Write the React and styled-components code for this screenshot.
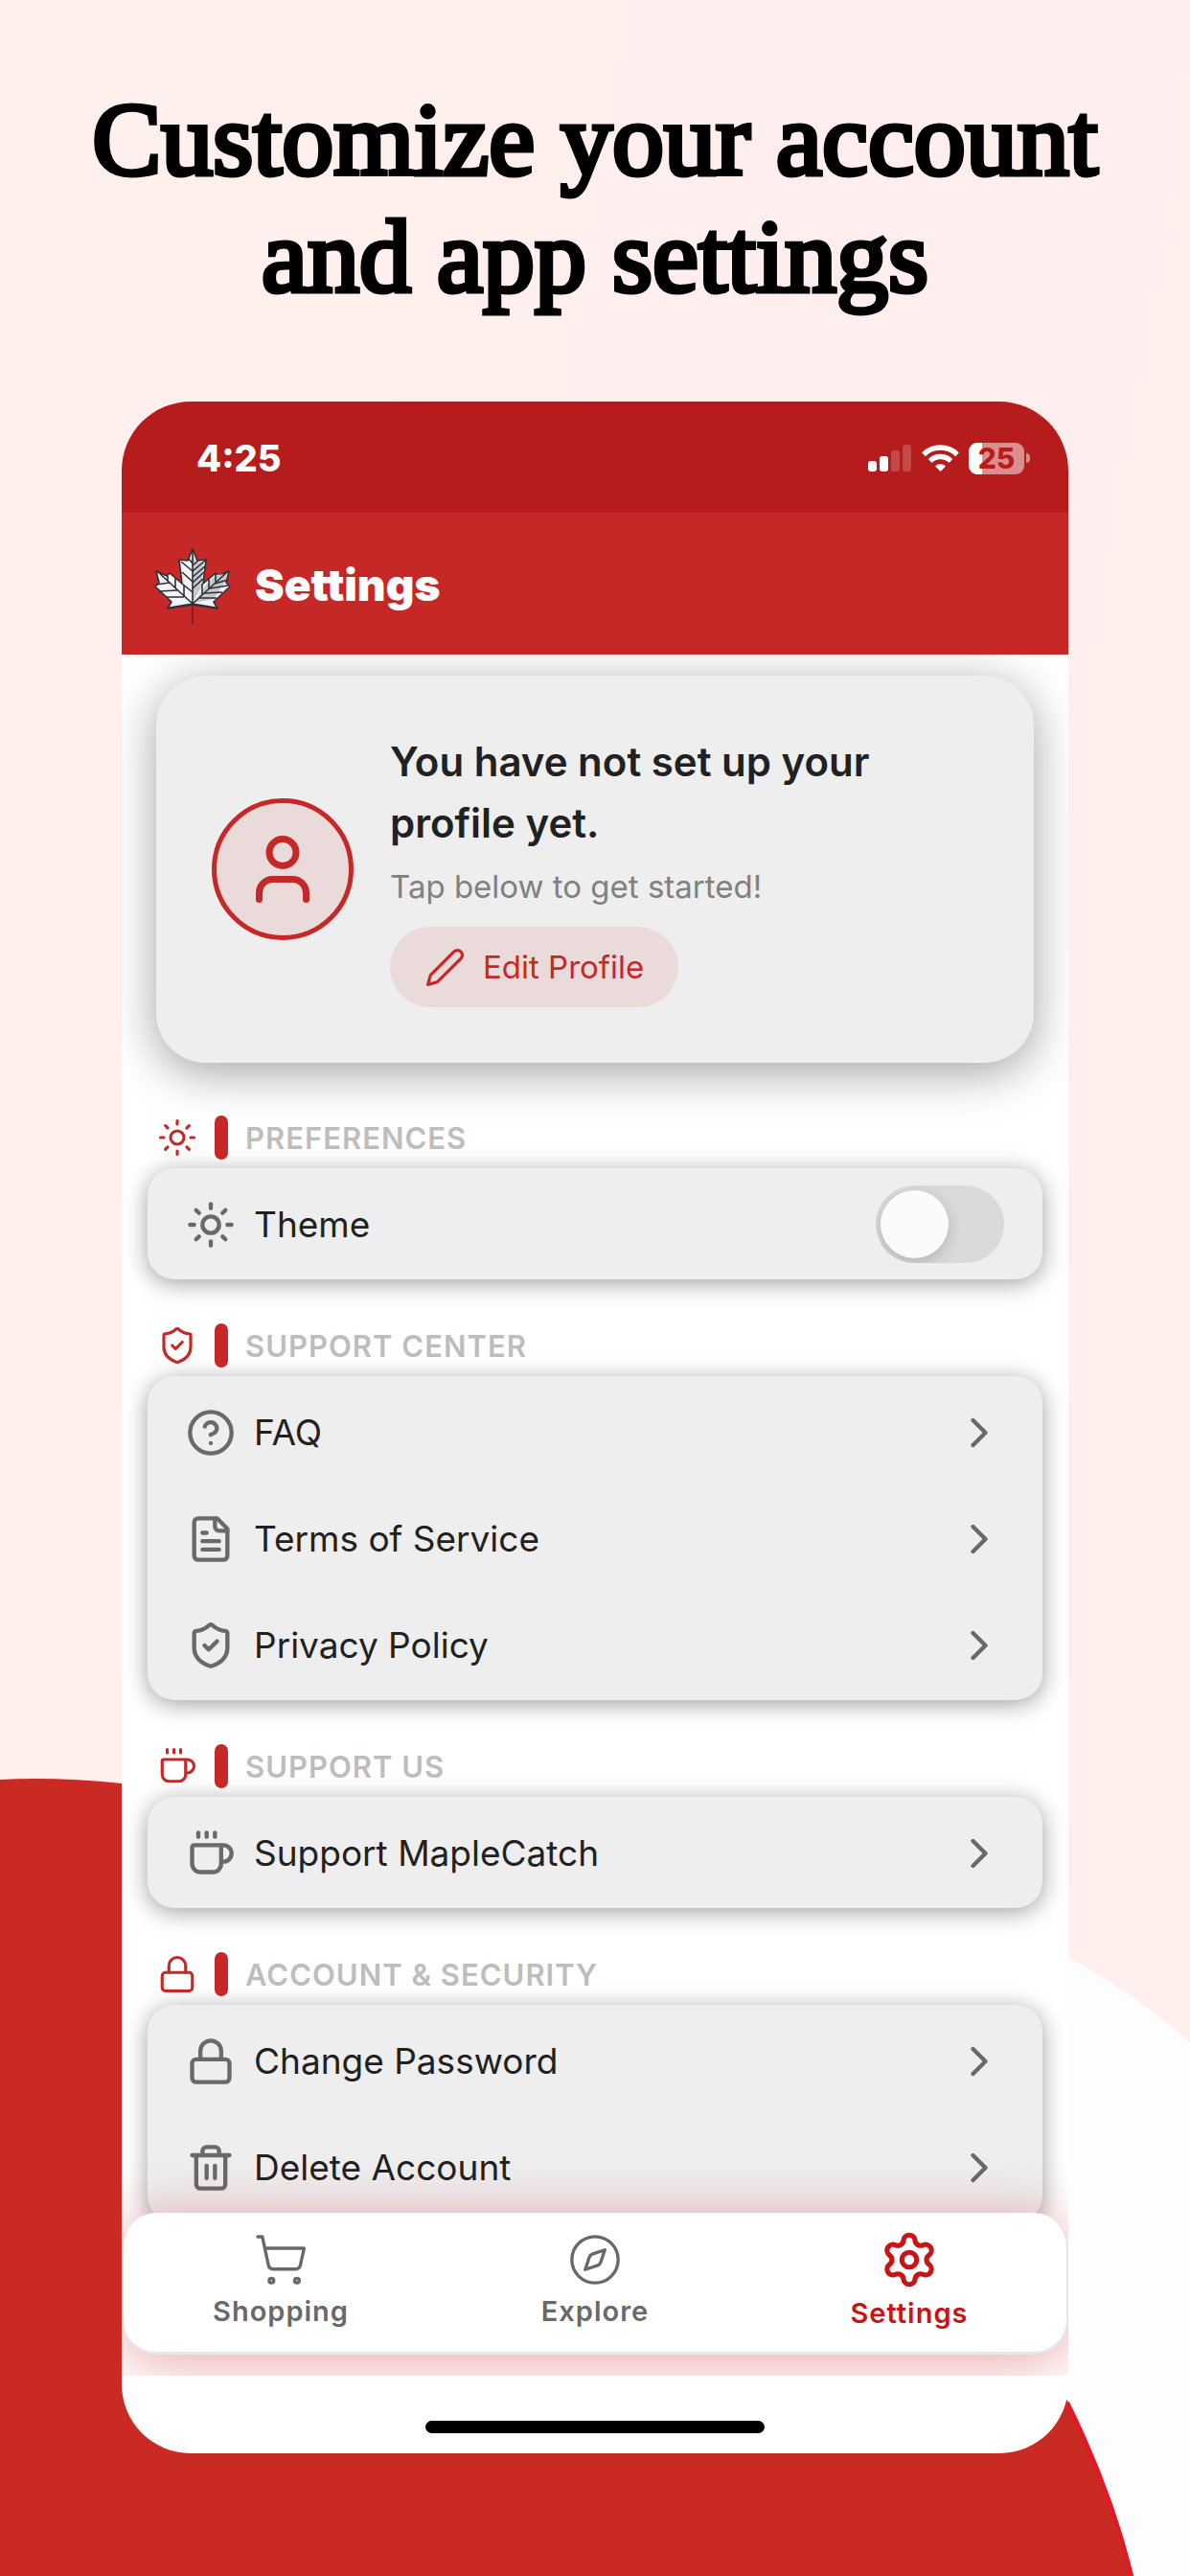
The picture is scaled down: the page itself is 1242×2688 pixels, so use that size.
import React from "react";
import styled, { createGlobalStyle } from "styled-components";
import {
  ChevronRight,
  Coffee,
  Compass,
  Lock,
  Settings as Gear,
  ShieldCheck,
  ShoppingCart,
  Sun,
  Trash2,
  User,
} from "lucide-react";

const color = {
  brand: "#c62828",
  brandDark: "#b71c1c",
  surface: "#eeeeee",
  ink: "#212121",
  muted: "#808080",
  label: "#bdbdbd",
  icon: "#696969",
  active: "#c81414",
};

const GlobalStyle = createGlobalStyle`
  *, *::before, *::after { box-sizing: border-box; }
  body {
    margin: 0;
    background: #ffefed;
    font-family: Inter, Roboto, "Liberation Sans", sans-serif;
    color: ${color.ink};
  }
  h1, h2, h3, p, ul { margin: 0; padding: 0; }
  ul { list-style: none; }
  a { color: inherit; text-decoration: none; }
  button { font: inherit; border: 0; cursor: pointer; }
  svg { display: block; flex: none; }
`;

const Page = styled.div`
  position: relative;
  display: flex;
  flex-direction: column;
  gap: 90px;
  padding: 85px 127px 128px;
  background: linear-gradient(100deg, #fff0ed, #ffeeed 50%, #ffefed);
  overflow: hidden;
`;

const Backdrop = styled.svg`
  position: absolute;
  inset: 0;
  width: 100%;
  height: 100%;
`;

const Headline = styled.h1`
  position: relative;
  font-family: "Liberation Serif", serif;
  font-weight: 400;
  font-size: 108px;
  line-height: 122px;
  color: #000;
  -webkit-text-stroke: 5px #000;
  text-align: center;
  margin: 0 -60px;
  text-wrap: balance;
`;

const Phone = styled.main`
  position: relative;
  display: flex;
  flex-direction: column;
  background: #fff;
  border-radius: 72px;
  overflow: hidden;
`;

const StatusBar = styled.div`
  display: flex;
  align-items: center;
  justify-content: space-between;
  height: 116px;
  padding: 2px 40px 0 78px;
  background: ${color.brandDark};
  color: #fff;
`;

const Clock = styled.time`
  font-size: 38px;
  font-weight: 800;
`;

const StatusIcons = styled.div`
  display: flex;
  align-items: center;
  gap: 10px;
`;

const Battery = styled.div`
  display: flex;
  align-items: center;
  gap: 2px;

  &::after {
    content: "";
    width: 4px;
    height: 10px;
    border-radius: 0 5px 5px 0;
    background: #d98a8a;
  }
`;

const BatteryLevel = styled.span`
  width: 58px;
  height: 33px;
  border-radius: 9px;
  background: linear-gradient(90deg, #fff ${(p) => p.$level}%, #dc8e8e ${(p) => p.$level}%);
  color: ${color.brandDark};
  font-size: 30px;
  font-weight: 800;
  line-height: 33px;
  text-align: center;
`;

const AppBar = styled.header`
  display: flex;
  align-items: center;
  gap: 25px;
  height: 148px;
  padding: 3px 34px 0;
  background: ${color.brand};
  color: #fff;
`;

const AppTitle = styled.h2`
  font-size: 46px;
  font-weight: 900;
  line-height: 56px;
  padding-bottom: 2px;
`;

const Content = styled.div`
  padding: 22px 0;
  overflow: hidden;
`;

const ProfileCard = styled.section`
  display: flex;
  align-items: center;
  gap: 38px;
  margin: 0 36px 55px;
  padding: 58px;
  border-radius: 52px;
  background: ${color.surface};
  box-shadow: 0 10px 50px rgba(0, 0, 0, 0.37);
`;

const Avatar = styled.div`
  display: grid;
  place-items: center;
  flex: none;
  width: 148px;
  height: 148px;
  border: 5px solid ${color.brand};
  border-radius: 50%;
  background: #ebdada;
  color: ${color.brand};
`;

const ProfileText = styled.div`
  display: flex;
  flex-direction: column;
  align-items: flex-start;
`;

const ProfileTitle = styled.h3`
  font-size: 42px;
  font-weight: 600;
  line-height: 64px;
`;

const ProfileHint = styled.p`
  margin: 8px 0 16px;
  font-size: 33px;
  line-height: 52px;
  color: ${color.muted};
`;

const EditButton = styled.button`
  display: flex;
  align-items: center;
  gap: 18px;
  height: 84px;
  padding: 0 36px;
  border-radius: 42px;
  background: #ebdada;
  color: ${color.brand};
  font-size: 33px;
`;

const Section = styled.section`
  margin: 0 27px;

  & + & { margin-top: 46px; }
`;

const SectionHead = styled.div`
  display: flex;
  align-items: center;
  gap: 18px;
  height: 46px;
  margin-bottom: 9px;
  padding-left: 10px;
  color: ${color.brand};
`;

const Marker = styled.span`
  width: 14px;
  height: 46px;
  border-radius: 7px;
  background: ${color.brand};
`;

const SectionTitle = styled.h3`
  font-size: 31px;
  font-weight: 600;
  letter-spacing: 1px;
  text-transform: uppercase;
  color: ${color.label};
`;

const Card = styled.ul`
  padding: 3px 0 2px;
  border-radius: 28px;
  background: ${color.surface};
  box-shadow: 0 4px 24px rgba(0, 0, 0, 0.38);
`;

const Row = styled.a`
  display: flex;
  align-items: center;
  gap: 19px;
  height: 111px;
  padding: 0 40px;
  font-size: 37px;

  svg { color: ${color.icon}; }
`;

const RowText = styled.span`
  flex: 1;
`;

const Switch = styled.input`
  appearance: none;
  display: flex;
  align-items: center;
  width: 134px;
  height: 81px;
  margin: 0;
  padding: 5px;
  border-radius: 41px;
  background: #dadada;
  overflow: hidden;
  cursor: pointer;

  &::before {
    content: "";
    width: 71px;
    height: 71px;
    border-radius: 50%;
    background: #fafafa;
    box-shadow: 0 5px 16px rgba(0, 0, 0, 0.18);
  }

  &:checked { background: ${color.brand}; }
  &:checked::before { margin-left: auto; }
`;

const TabBar = styled.nav`
  position: relative;
  display: grid;
  grid-template-columns: repeat(3, 1fr);
  height: 148px;
  margin-top: -10px;
  padding-bottom: 6px;
  border: solid #e5e7eb;
  border-width: 0 2px 3px;
  border-radius: 36px;
  background: #fff;
  box-shadow: 0 8px 60px rgba(198, 20, 20, 0.38);
`;

const Tab = styled.a`
  display: flex;
  flex-direction: column;
  align-items: center;
  justify-content: center;
  gap: 8px;
  color: ${(p) => (p.$active ? color.active : color.icon)};
  font-size: 29px;
  font-weight: 600;
  line-height: 34px;
  letter-spacing: 1px;
`;

const HomeArea = styled.div`
  display: flex;
  justify-content: center;
  padding: 47px 0 21px;
`;

const HomeIndicator = styled.span`
  width: 354px;
  height: 13px;
  border-radius: 7px;
  background: #000;
`;

function Glyph({ size, strokeWidth, children }) {
  return (
    <svg
      width={size}
      height={size}
      viewBox="0 0 24 24"
      fill="none"
      stroke="currentColor"
      strokeWidth={strokeWidth}
      strokeLinecap="round"
      strokeLinejoin="round"
      aria-hidden="true"
    >
      {children}
    </svg>
  );
}

const Help = (props) => (
  <Glyph {...props}>
    <circle cx="12" cy="12" r="10" />
    <path d="M9.09 9a3 3 0 0 1 5.83 1c0 2-3 3-3 3" />
    <path d="M12 17h.01" />
  </Glyph>
);

const Document = (props) => (
  <Glyph {...props}>
    <path d="M15 2H6a2 2 0 0 0-2 2v16a2 2 0 0 0 2 2h12a2 2 0 0 0 2-2V7Z" />
    <path d="M14 2v4a2 2 0 0 0 2 2h4" />
    <path d="M10 9H8" />
    <path d="M16 13H8" />
    <path d="M16 17H8" />
  </Glyph>
);

const Pencil = (props) => (
  <Glyph {...props}>
    <path d="M17 3a2.85 2.83 0 1 1 4 4L7.5 20.5 2 22l1.5-5.5Z" />
  </Glyph>
);

function Signal() {
  return (
    <svg width="46" height="28" viewBox="0 0 46 28" fill="#fff" aria-hidden="true">
      <rect x="0" y="17" width="9" height="11" rx="3" />
      <rect x="12" y="12" width="9" height="16" rx="3" />
      <rect x="24" y="6" width="9" height="22" rx="3" opacity="0.2" />
      <rect x="36" y="0" width="9" height="28" rx="3" opacity="0.2" />
    </svg>
  );
}

function Wifi() {
  return (
    <svg width="39" height="28" viewBox="0 0 39 28" aria-hidden="true">
      <g fill="none" stroke="#fff" strokeWidth="5.4">
        <path d="M2 10.2a25 25 0 0 1 35 0" />
        <path d="M8.6 17a15.6 15.6 0 0 1 21.8 0" />
      </g>
      <path d="M19.5 28 14 22.4a8 8 0 0 1 11 0Z" fill="#fff" />
    </svg>
  );
}

function MapleLeaf() {
  return (
    <svg width="80" height="80" viewBox="0 0 80 80" aria-hidden="true">
      <path
        d="M40 2 45 14 54 13 51 38 64 27 67 30 78 25 75 37 79 41 62 57 66 64 40 60 14 64 18 57 1 41 5 37 2 25 13 30 16 27 29 38 26 13 35 14Z"
        fill="#f4f4f6"
        stroke="#2b2f36"
        strokeWidth="1.6"
        strokeLinejoin="round"
      />
      <path d="M40 6 44 16 52 15 49 42 40 58ZM52 42 64 29 76 28 73 38 62 54 42 58Z" fill="#c6c8cc" />
      <g fill="none" stroke="#2b2f36" strokeWidth="1.6">
        <path d="M40 2V60M40 59 4 26M40 59 76 26M40 59 16 63M40 59 64 63" />
        <path d="M40 25 28 15M40 36 29 26M40 47 29 38M36 12 40 17" />
        <path d="M40 25 53 14M40 31 53 20M40 37 52 26M40 43 51 33M40 19 46 14" />
        <path d="M22 43V32M14 35V30M31 51V40M16 37 2 39M24 45 5 46M31 52 13 52" />
        <path d="M57 43V32M64 36V28M50 49V38M63 38 77 34M58 43 77 40M52 48 71 47M47 53 65 53" />
      </g>
      <path d="M40 60V80" stroke="#6d1f23" strokeWidth="1.6" />
    </svg>
  );
}

const sections = [
  {
    title: "Preferences",
    Icon: Sun,
    rows: [{ label: "Theme", Icon: Sun, toggle: true }],
  },
  {
    title: "Support Center",
    Icon: ShieldCheck,
    rows: [
      { label: "FAQ", Icon: Help },
      { label: "Terms of Service", Icon: Document },
      { label: "Privacy Policy", Icon: ShieldCheck },
    ],
  },
  {
    title: "Support Us",
    Icon: Coffee,
    rows: [{ label: "Support MapleCatch", Icon: Coffee }],
  },
  {
    title: "Account & Security",
    Icon: Lock,
    rows: [
      { label: "Change Password", Icon: Lock },
      { label: "Delete Account", Icon: Trash2 },
    ],
  },
];

const tabs = [
  { label: "Shopping", Icon: ShoppingCart },
  { label: "Explore", Icon: Compass },
  { label: "Settings", Icon: Gear, active: true },
];

function SettingRow({ label, Icon, toggle }) {
  const body = (
    <>
      <Icon size={52} strokeWidth={2} />
      <RowText>{label}</RowText>
    </>
  );
  return (
    <li>
      {toggle ? (
        <Row as="label" htmlFor="theme-switch">
          {body}
          <Switch id="theme-switch" type="checkbox" role="switch" />
        </Row>
      ) : (
        <Row href="#">
          {body}
          <ChevronRight size={52} strokeWidth={2} />
        </Row>
      )}
    </li>
  );
}

export default function App() {
  return (
    <>
      <GlobalStyle />
      <Page>
        <Backdrop viewBox="0 0 1242 2688" preserveAspectRatio="none" aria-hidden="true">
          <path d="M1000 1985Q1150 2050 1242 2131V2688H1000Z" fill="#fefdfd" />
          <path
            d="M0 1857Q60 1854 127 1861C520 1900 930 2140 1114 2505Q1161 2597 1183 2688H0Z"
            fill="#c92a24"
          />
          <path d="M1114 2507Q1159 2597 1181 2688" fill="none" stroke="#ea1520" strokeWidth="4" />
        </Backdrop>
        <Headline>Customize your account and app settings</Headline>
        <Phone>
          <StatusBar>
            <Clock>4:25</Clock>
            <StatusIcons>
              <Signal />
              <Wifi />
              <Battery>
                <BatteryLevel $level={25}>25</BatteryLevel>
              </Battery>
            </StatusIcons>
          </StatusBar>
          <AppBar>
            <MapleLeaf />
            <AppTitle>Settings</AppTitle>
          </AppBar>
          <Content>
            <ProfileCard>
              <Avatar>
                <User size={84} strokeWidth={2} />
              </Avatar>
              <ProfileText>
                <ProfileTitle>You have not set up your profile yet.</ProfileTitle>
                <ProfileHint>Tap below to get started!</ProfileHint>
                <EditButton type="button">
                  <Pencil size={43} strokeWidth={1.8} />
                  Edit Profile
                </EditButton>
              </ProfileText>
            </ProfileCard>
            {sections.map(({ title, Icon, rows }) => (
              <Section key={title}>
                <SectionHead>
                  <Icon size={42} strokeWidth={1.8} />
                  <Marker />
                  <SectionTitle>{title}</SectionTitle>
                </SectionHead>
                <Card>
                  {rows.map((row) => (
                    <SettingRow key={row.label} {...row} />
                  ))}
                </Card>
              </Section>
            ))}
            <TabBar>
              {tabs.map(({ label, Icon, active }) => (
                <Tab key={label} href="#" $active={active} aria-current={active ? "page" : undefined}>
                  <Icon size={active ? 62 : 58} strokeWidth={active ? 2 : 1.4} />
                  {label}
                </Tab>
              ))}
            </TabBar>
          </Content>
          <HomeArea>
            <HomeIndicator />
          </HomeArea>
        </Phone>
      </Page>
    </>
  );
}
